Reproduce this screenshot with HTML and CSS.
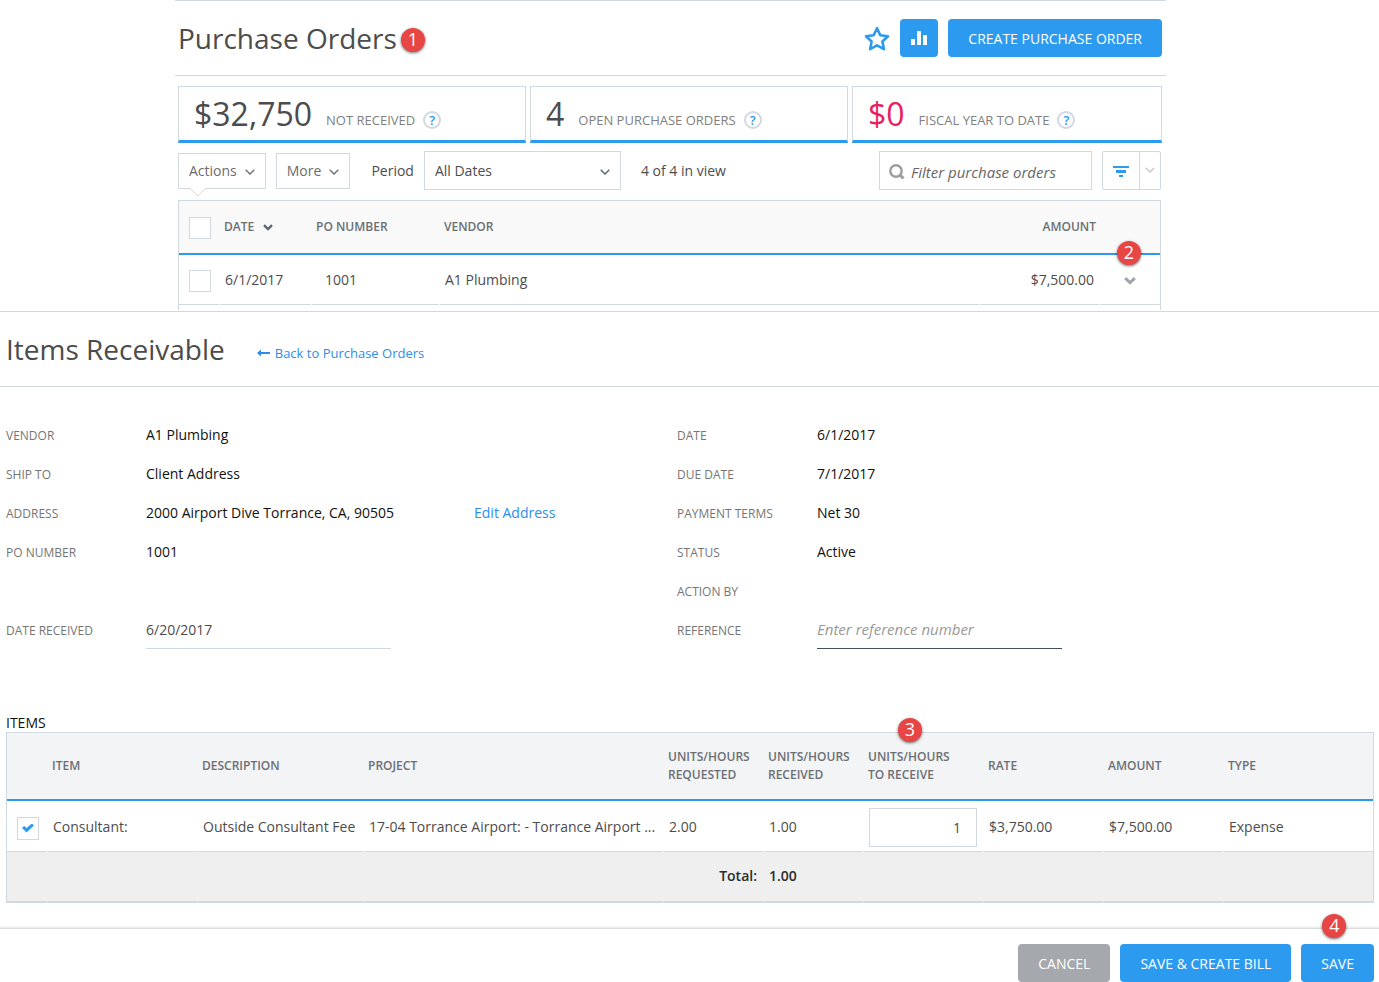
FILE: index.html
```html
<!DOCTYPE html>
<html lang="en">
<head>
<meta charset="utf-8">
<title>Purchase Orders</title>
<link rel="stylesheet" href="styles.css">
</head>
<body>
<section class="orders">
  <header class="orders-header">
    <h1 class="title">Purchase Orders</h1>
    <span class="step step-title">1</span>
    <div class="header-actions">
      <button class="star" type="button" aria-label="Favorite">
        <svg width="26" height="26" viewBox="0 0 26 26"><path d="M13 2.200l3.300 7 7.700 1-5.600 5.300 1.500 7.700-6.900-3.900-6.900 3.900 1.500-7.700L2 10.200l7.700-1z" fill="none" stroke="#2c9aef" stroke-width="2.6" stroke-linejoin="round"/></svg>
      </button>
      <button class="btn btn-icon" type="button" aria-label="Reports">
        <svg width="16" height="14" viewBox="0 0 16 14" fill="#fff"><path d="M0 8h4v6H0zM6 0h4v14H6zM12 4h4v10h-4z"/></svg>
      </button>
      <button class="btn" type="button">CREATE PURCHASE ORDER</button>
    </div>
  </header>

  <div class="cards">
    <div class="card"><span class="figure">$32,750</span><span class="caption">NOT RECEIVED</span><button class="help" type="button">?</button></div>
    <div class="card"><span class="figure">4</span><span class="caption">OPEN PURCHASE ORDERS</span><button class="help" type="button">?</button></div>
    <div class="card"><span class="figure figure-alert">$0</span><span class="caption">FISCAL YEAR TO DATE</span><button class="help" type="button">?</button></div>
  </div>

  <div class="toolbar">
    <button class="menu" type="button">Actions
      <svg class="chevron" width="10" height="6" viewBox="0 0 10 6"><path d="M.7.7L5 5 9.300.7" fill="none" stroke="#777" stroke-width="1.5"/></svg>
      <svg class="pointer" width="16" height="9" viewBox="0 0 16 9"><path d="M0 0h16L8 8z" fill="#fff"/><path d="M.5.5L8 8 15.500.5" fill="none" stroke="#d2d8e0"/></svg>
    </button>
    <button class="menu" type="button">More
      <svg class="chevron" width="10" height="6" viewBox="0 0 10 6"><path d="M.7.7L5 5 9.300.7" fill="none" stroke="#777" stroke-width="1.5"/></svg>
    </button>
    <label class="period-label" for="period">Period</label>
    <div class="select-wrap">
      <select class="period" id="period"><option>All Dates</option></select>
      <svg class="select-arrow" width="10" height="6" viewBox="0 0 10 6"><path d="M.7.7L5 5 9.300.7" fill="none" stroke="#5d6770" stroke-width="1.5"/></svg>
    </div>
    <span class="count">4 of 4 in view</span>
    <label class="search">
      <svg width="16" height="16" viewBox="0 0 16 16"><circle cx="7" cy="7" r="5.700" fill="none" stroke="#9b9ea1" stroke-width="2.400"/><path d="M10.500 10.500l4 4" stroke="#9b9ea1" stroke-width="3"/></svg>
      <input type="text" placeholder="Filter purchase orders" aria-label="Filter purchase orders">
    </label>
    <div class="filter">
      <button class="filter-main" type="button" aria-label="Filter">
        <svg width="16" height="12" viewBox="0 0 16 12" fill="#2c9aef"><path d="M0 0h16v2H0zM3 4h10v3H3zM6 9h4v2H6z"/></svg>
      </button>
      <button class="filter-more" type="button" aria-label="Filter options">
        <svg width="10" height="6" viewBox="0 0 10 6"><path d="M.7.7L5 5 9.300.7" fill="none" stroke="#c5ced8" stroke-width="1.5"/></svg>
      </button>
    </div>
  </div>

  <div class="orders-grid">
    <table class="grid">
      <colgroup><col class="w-check"><col class="w-date"><col class="w-po"><col><col class="w-total"><col class="w-row"></colgroup>
      <thead>
        <tr>
          <th><input class="check" type="checkbox" aria-label="Select all"></th>
          <th>DATE <svg class="sort" width="10" height="7" viewBox="0 0 10 7"><path d="M1 1.200L5 5 9 1.200" fill="none" stroke="#5d6770" stroke-width="2.400"/></svg></th>
          <th>PO NUMBER</th><th>VENDOR</th><th class="num">AMOUNT</th><th></th>
        </tr>
      </thead>
      <tbody>
        <tr>
          <td><input class="check" type="checkbox" aria-label="Select order 1001"></td>
          <td>6/1/2017</td><td class="po">1001</td><td>A1 Plumbing</td><td class="num">$7,500.00</td>
          <td class="row-menu">
            <button class="row-button" type="button" aria-label="Row menu"><svg width="12" height="8" viewBox="0 0 12 8"><path d="M1.200 1.200L6 5.700l4.800-4.500" fill="none" stroke="#a2a6aa" stroke-width="3"/></svg></button>
            <span class="step step-row">2</span>
          </td>
        </tr>
      </tbody>
    </table>
  </div>
</section>

<section class="receive">
  <header class="receive-header">
    <h2 class="title">Items Receivable</h2>
    <a class="back" href="#"><svg width="13" height="8" viewBox="0 0 13 8"><path d="M0 4l4-3.500v2.500h9v2H4v2.500z" fill="#2c8eea"/></svg>Back to Purchase Orders</a>
  </header>

  <div class="details">
    <div class="column">
      <div class="field"><span class="label">VENDOR</span><span class="value">A1 Plumbing</span></div>
      <div class="field"><span class="label">SHIP TO</span><span class="value">Client Address</span></div>
      <div class="field"><span class="label">ADDRESS</span><span class="value address">2000 Airport Dive Torrance, CA, 90505</span><a class="link" href="#">Edit Address</a></div>
      <div class="field"><span class="label">PO NUMBER</span><span class="value">1001</span></div>
      <div class="field"></div>
      <div class="field"><label class="label" for="received">DATE RECEIVED</label><input class="line-input" id="received" type="text" value="6/20/2017"></div>
    </div>
    <div class="column">
      <div class="field"><span class="label">DATE</span><span class="value">6/1/2017</span></div>
      <div class="field"><span class="label">DUE DATE</span><span class="value">7/1/2017</span></div>
      <div class="field"><span class="label">PAYMENT TERMS</span><span class="value">Net 30</span></div>
      <div class="field"><span class="label">STATUS</span><span class="value">Active</span></div>
      <div class="field"><span class="label">ACTION BY</span></div>
      <div class="field"><label class="label" for="reference">REFERENCE</label><input class="line-input line-dark" id="reference" type="text" placeholder="Enter reference number"></div>
    </div>
  </div>

  <div class="items">
    <h3 class="items-title">ITEMS</h3>
    <div class="items-grid">
      <table class="grid">
        <colgroup><col class="w-41"><col class="w-150"><col class="w-166"><col class="w-300"><col class="w-100"><col class="w-100"><col class="w-120"><col class="w-120"><col class="w-120"><col></colgroup>
        <thead>
          <tr>
            <th></th><th>ITEM</th><th>DESCRIPTION</th><th>PROJECT</th><th>UNITS/HOURS<br>REQUESTED</th><th>UNITS/HOURS<br>RECEIVED</th>
            <th class="marked">UNITS/HOURS<br>TO RECEIVE<span class="step step-column">3</span></th>
            <th>RATE</th><th>AMOUNT</th><th>TYPE</th>
          </tr>
        </thead>
        <tbody>
          <tr>
            <td><input class="check" type="checkbox" checked aria-label="Select item"></td>
            <td>Consultant:</td><td class="tight">Outside Consultant Fee</td><td>17-04 Torrance Airport: - Torrance Airport ...</td><td>2.00</td><td>1.00</td>
            <td><input class="quantity" type="text" value="1" aria-label="Units to receive"></td>
            <td>$3,750.00</td><td>$7,500.00</td><td>Expense</td>
          </tr>
        </tbody>
        <tfoot>
          <tr><td></td><td></td><td></td><td></td><td class="num">Total:</td><td>1.00</td><td></td><td></td><td></td><td></td></tr>
        </tfoot>
      </table>
    </div>
  </div>

  <footer class="actions">
    <button class="btn btn-muted" type="button">CANCEL</button>
    <button class="btn" type="button">SAVE &amp; CREATE BILL</button>
    <div class="save"><button class="btn" type="button">SAVE</button><span class="step step-save">4</span></div>
  </footer>
</section>
</body>
</html>
```
FILE: styles.css
```css
* { box-sizing: border-box; }
body {
  margin: 0;
  background: #fff;
  color: #4c4c4c;
  font: 14px/20px "Open Sans", "Noto Sans", sans-serif;
}
button, input, select { margin: 0; font: inherit; color: inherit; }
button { padding: 0; border: 0; background: none; cursor: pointer; }
a { color: #2c8eea; text-decoration: none; }
svg { display: block; flex: none; }

.title { margin: 0; font-size: 28px; line-height: 38px; font-weight: 400; color: #4c4c4c; }

.step {
  width: 24px;
  height: 24px;
  border-radius: 50%;
  background: #e84545;
  box-shadow: 0 1px 3px rgba(0, 0, 0, .6);
  color: #fff;
  font-size: 18px;
  line-height: 23px;
  font-weight: 400;
  text-align: center;
}
.step-title { margin-top: 3px; }

.btn {
  height: 38px;
  padding: 2px 20px 0;
  border-radius: 4px;
  background: #2c9aef;
  color: #fff;
  white-space: nowrap;
}
.btn-icon { width: 38px; padding: 0 11px; }
.btn-muted { background: #a5a8ac; }

/* Purchase order list */
.orders { margin: 0 213px 0 175px; }
.orders-header {
  display: flex;
  align-items: center;
  gap: 4px;
  height: 76px;
  padding: 0 4px 0 3px;
  border-top: 1px solid #d2d8e0;
  border-bottom: 1px solid #d2d8e0;
}
.header-actions { display: flex; align-items: center; gap: 10px; margin-left: auto; }
.star { padding-top: 2px; }

.cards {
  display: grid;
  grid-template-columns: 348fr 318fr 310fr;
  gap: 4px;
  padding: 10px 4px 0 3px;
}
.card {
  display: flex;
  align-items: center;
  height: 57px;
  padding: 0 15px;
  border: 1px solid #d2d8e0;
  border-bottom: 3px solid #2c9aef;
}
.figure { margin-right: 14px; font-size: 32px; line-height: 44px; }
.figure-alert { color: #e91e63; }
.caption { margin-right: 8px; padding-top: 12px; font-size: 13px; color: #808080; }
.help {
  width: 18px;
  height: 18px;
  margin-top: 13px;
  border: 2px solid #d2d8e0;
  border-radius: 50%;
  color: #2c9aef;
  font-size: 13px;
  line-height: 14px;
  font-weight: 600;
}

.toolbar { display: flex; align-items: center; height: 57px; padding: 0 5px 2px 3px; }
.menu {
  position: relative;
  display: flex;
  align-items: center;
  gap: 8px;
  height: 36px;
  margin-right: 10px;
  padding: 0 10px;
  border: 1px solid #d2d8e0;
  color: #6c6c6c;
}
.chevron { margin-top: 3px; }
.pointer { position: absolute; left: 11px; top: 34px; }
.period-label { margin: 0 10px 0 11px; }
.select-wrap { position: relative; width: 197px; }
.period {
  display: block;
  width: 100%;
  height: 39px;
  padding: 0 10px;
  border: 1px solid #d2d8e0;
  border-radius: 0;
  background: #fff;
  appearance: none;
}
.select-arrow { position: absolute; right: 11px; top: 18px; pointer-events: none; }
.count { margin-left: 20px; }
.search {
  display: flex;
  align-items: center;
  gap: 6px;
  width: 213px;
  height: 39px;
  margin-left: auto;
  padding: 2px 9px 0;
  border: 1px solid #d2d8e0;
}
.search input { width: 100%; min-width: 0; padding: 0; border: 0; background: none; outline: 0; font-size: 15px; }
.search input::placeholder { color: #666; font-style: italic; opacity: 1; }
.filter { display: flex; height: 39px; margin-left: 10px; border: 1px solid #d2d8e0; border-radius: 2px; }
.filter-main { width: 37px; padding: 2px 10px 0; border-right: 1px solid #d2d8e0; }
.filter-more { width: 20px; padding: 0 5px 2px; }

/* Tables */
.grid { width: 100%; table-layout: fixed; border-collapse: separate; border-spacing: 0; }
.grid th {
  padding: 0 4px;
  border-bottom: 2px solid #2c9aef;
  color: #6b6f74;
  font-size: 12px;
  line-height: 18px;
  font-weight: 600;
  text-align: left;
}
.grid td {
  height: 50px;
  padding: 0 5px;
  border-right: 2px solid transparent;
  border-bottom: 1px solid #d2d8e0;
  white-space: nowrap;
}
.grid td:last-child { border-right: 0; }
.grid .num { text-align: right; }
.check {
  display: block;
  width: 22px;
  height: 22px;
  margin: 2px 0 0 6px;
  border: 1px solid #d2d8e0;
  background: #fff;
  appearance: none;
}
.check:checked::before {
  content: "";
  display: block;
  width: 12px;
  height: 9px;
  margin: 6px 4px;
  background: #2c9aef;
  clip-path: polygon(0 50%, 18% 28%, 38% 50%, 82% 0, 100% 22%, 38% 100%);
}

.orders-grid {
  margin: 0 5px 0 3px;
  padding-bottom: 5px;
  border: 1px solid #d2d8e0;
  border-bottom: 0;
}
.orders-grid th { height: 54px; background: #f9f9f9; }
.orders-grid .po { padding-left: 13px; }
.orders-grid td .check { margin: 3px 0 0 5px; }
.orders-grid td.num { padding-right: 4px; }
.w-check { width: 41px; }
.w-date { width: 92px; }
.w-po { width: 128px; }
.w-total { width: 120px; }
.w-row { width: 60px; }
.sort { display: inline-block; margin-left: 6px; }
.orders-grid .row-menu { position: relative; padding-left: 4px; }
.row-button { display: block; width: 12px; margin: 3px 0 0 20px; }
.step-row { position: absolute; left: 17px; top: -14px; }

/* Receiving form */
.receive { margin-top: 1px; }
.receive-header {
  display: flex;
  align-items: center;
  height: 76px;
  padding: 0 6px;
  border-top: 1px solid #d2d8e0;
  border-bottom: 1px solid #d2d8e0;
}
.back { display: flex; align-items: center; gap: 5px; margin: 8px 0 0 32px; font-size: 13px; }
.details { display: grid; grid-template-columns: 671fr 697fr; padding: 29px 5px 0 6px; }
.field { display: flex; align-items: center; height: 39px; }
.label { width: 140px; color: #757575; font-size: 12px; }
.value, .link { padding-bottom: 2px; }
.value { color: #111; }
.address { width: 328px; }
.line-input {
  width: 245px;
  height: 37px;
  padding: 0 0 2px;
  border: 0;
  border-bottom: 1px solid #d2d8e0;
  background: none;
  outline: 0;
}
.line-dark { border-bottom-color: #43505c; font-size: 15px; }
.line-input::placeholder { color: #999; font-style: italic; opacity: 1; }

.items { padding: 63px 5px 0 6px; }
.items-title { margin: 0; color: #111; font-size: 14px; line-height: 19px; font-weight: 400; }
.items-grid { border: 1px solid #d2d8e0; }
.items-grid th { height: 68px; background: #f3f4f6; }
.items-grid td { height: 51px; padding-top: 2px; }
.items-grid tfoot td { height: 50px; padding: 0 5px 2px; background: #efefef; color: #2b2b2b; font-weight: 600; }
.items-grid .check { height: 23px; margin: 2px 0 0 5px; }
.items-grid .tight { padding-right: 0; }
.w-41 { width: 41px; }
.w-100 { width: 100px; }
.w-120 { width: 120px; }
.w-150 { width: 150px; }
.w-166 { width: 166px; }
.w-300 { width: 300px; }
.marked { position: relative; }
.step-column { position: absolute; left: 34px; top: -15px; }
.quantity {
  display: block;
  width: 108px;
  height: 39px;
  padding: 0 15px;
  border: 1px solid #d2d8e0;
  background: #fff;
  text-align: right;
}

.actions {
  display: flex;
  justify-content: flex-end;
  gap: 10px;
  margin-top: 25px;
  padding: 15px 5px 0;
  border-top: 1px solid #dcdcdc;
  box-shadow: 0 -1px 2px rgba(0, 0, 0, .1);
}
.save { position: relative; }
.step-save { position: absolute; left: 21px; top: -30px; }
```
